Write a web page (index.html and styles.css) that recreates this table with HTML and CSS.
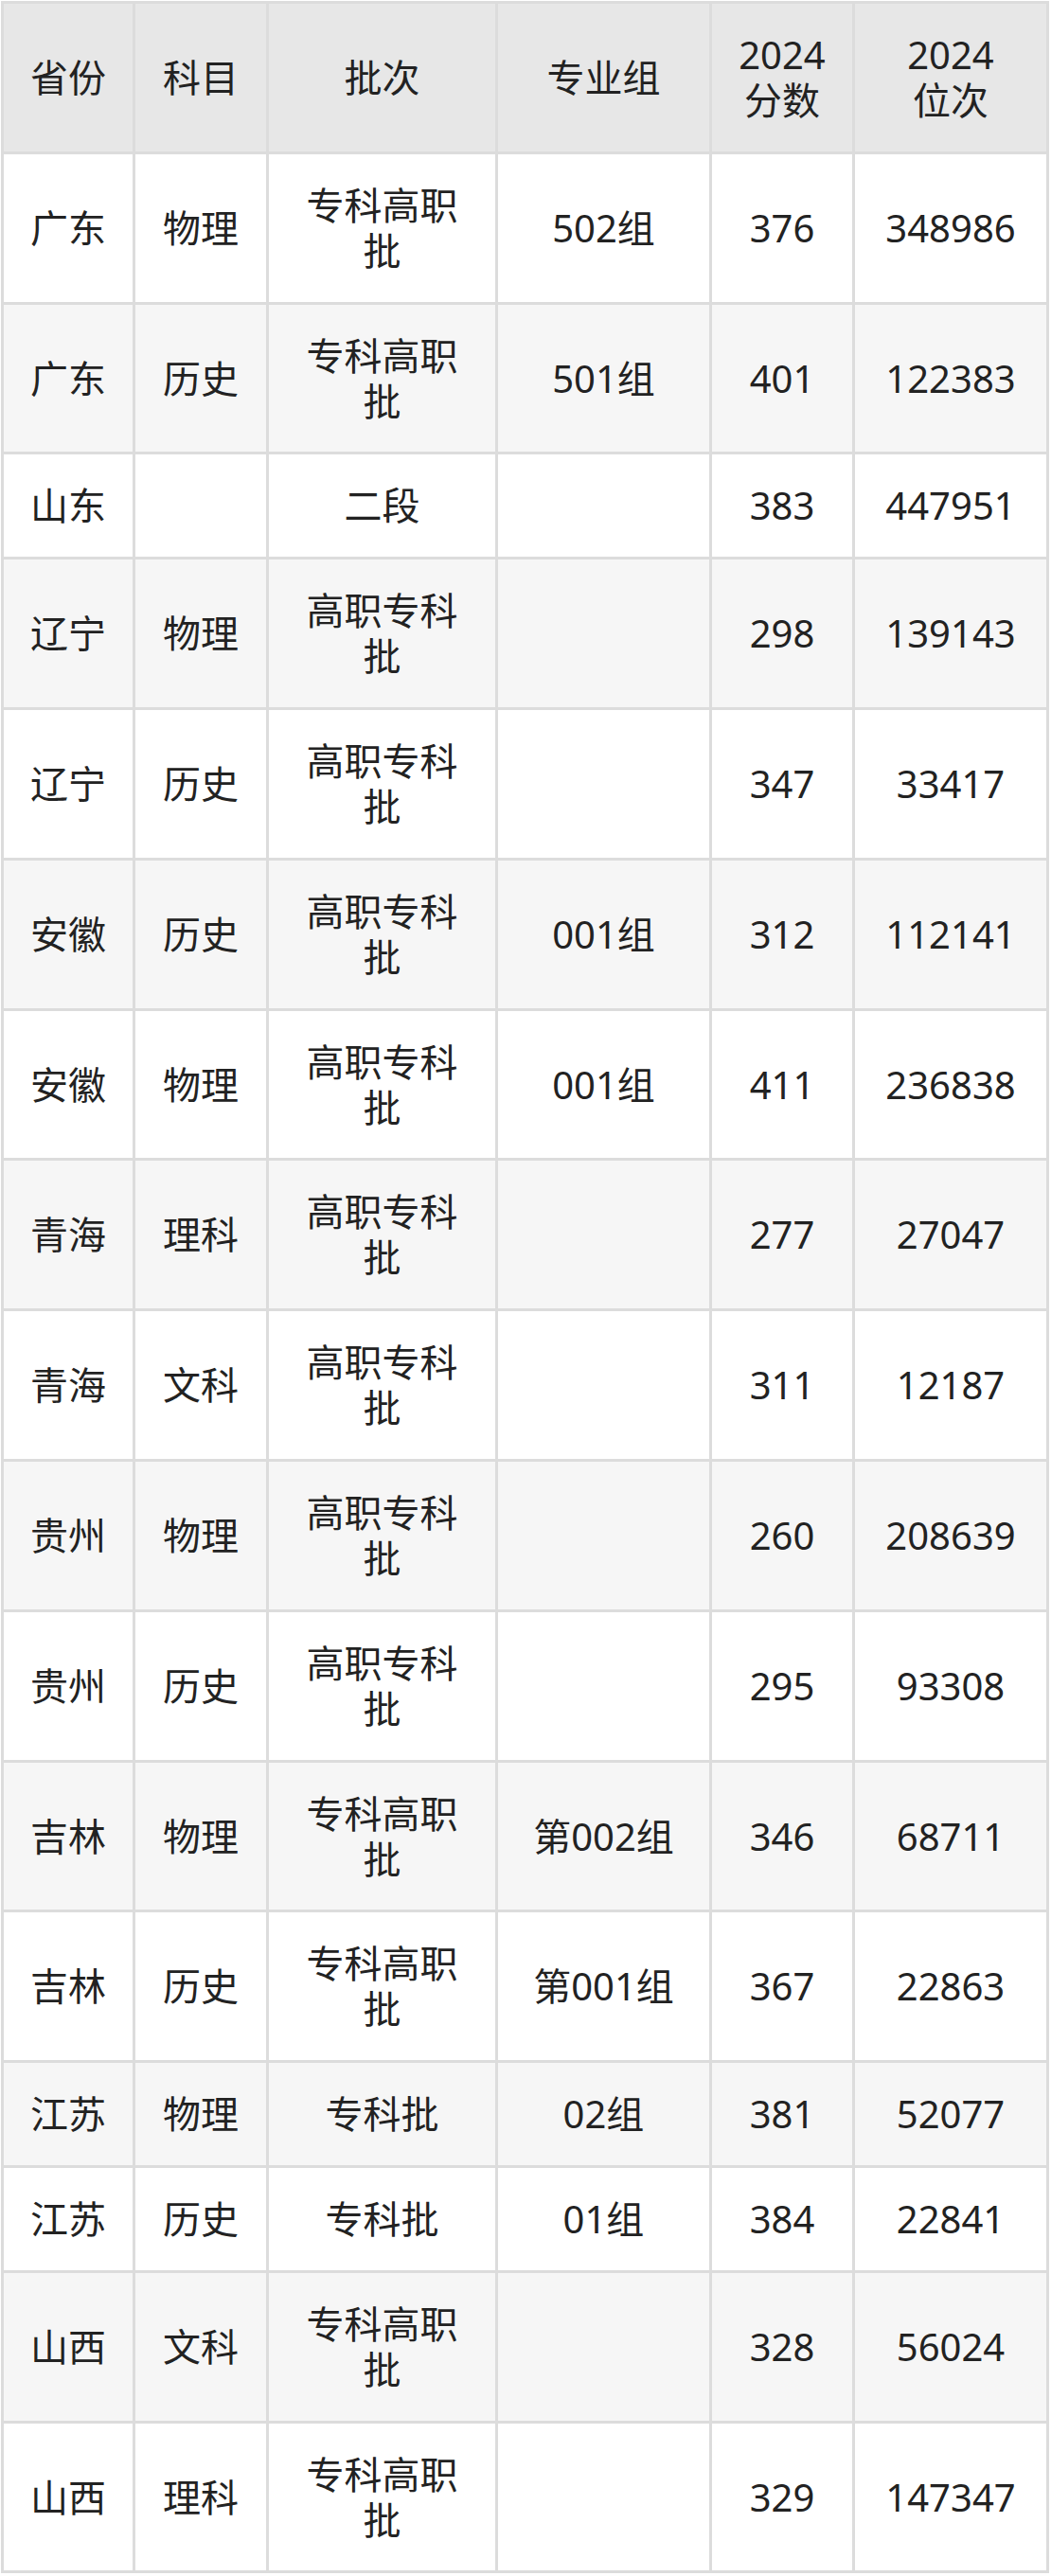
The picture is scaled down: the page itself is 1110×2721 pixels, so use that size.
FILE: index.html
```html
<!DOCTYPE html>
<html lang="zh-CN">
<head>
<meta charset="utf-8">
<title>2024 分数位次</title>
<link rel="stylesheet" href="styles.css">
</head>
<body>
<table class="score-table">
  <colgroup>
    <col class="c-prov"><col class="c-subj"><col class="c-batch"><col class="c-group"><col class="c-score"><col class="c-rank">
  </colgroup>
  <thead>
    <tr class="head">
      <th>省份</th><th>科目</th><th>批次</th><th>专业组</th><th>2024<br>分数</th><th>2024<br>位次</th>
    </tr>
  </thead>
  <tbody>
    <tr class="odd"><td>广东</td><td>物理</td><td>专科高职<br>批</td><td>502组</td><td>376</td><td>348986</td></tr>
    <tr class="even"><td>广东</td><td>历史</td><td>专科高职<br>批</td><td>501组</td><td>401</td><td>122383</td></tr>
    <tr class="odd"><td>山东</td><td></td><td>二段</td><td></td><td>383</td><td>447951</td></tr>
    <tr class="even"><td>辽宁</td><td>物理</td><td>高职专科<br>批</td><td></td><td>298</td><td>139143</td></tr>
    <tr class="odd"><td>辽宁</td><td>历史</td><td>高职专科<br>批</td><td></td><td>347</td><td>33417</td></tr>
    <tr class="even"><td>安徽</td><td>历史</td><td>高职专科<br>批</td><td>001组</td><td>312</td><td>112141</td></tr>
    <tr class="odd"><td>安徽</td><td>物理</td><td>高职专科<br>批</td><td>001组</td><td>411</td><td>236838</td></tr>
    <tr class="even"><td>青海</td><td>理科</td><td>高职专科<br>批</td><td></td><td>277</td><td>27047</td></tr>
    <tr class="odd"><td>青海</td><td>文科</td><td>高职专科<br>批</td><td></td><td>311</td><td>12187</td></tr>
    <tr class="even"><td>贵州</td><td>物理</td><td>高职专科<br>批</td><td></td><td>260</td><td>208639</td></tr>
    <tr class="odd"><td>贵州</td><td>历史</td><td>高职专科<br>批</td><td></td><td>295</td><td>93308</td></tr>
    <tr class="even"><td>吉林</td><td>物理</td><td>专科高职<br>批</td><td>第002组</td><td>346</td><td>68711</td></tr>
    <tr class="odd"><td>吉林</td><td>历史</td><td>专科高职<br>批</td><td>第001组</td><td>367</td><td>22863</td></tr>
    <tr class="even"><td>江苏</td><td>物理</td><td>专科批</td><td>02组</td><td>381</td><td>52077</td></tr>
    <tr class="odd"><td>江苏</td><td>历史</td><td>专科批</td><td>01组</td><td>384</td><td>22841</td></tr>
    <tr class="even"><td>山西</td><td>文科</td><td>专科高职<br>批</td><td></td><td>328</td><td>56024</td></tr>
    <tr class="odd"><td>山西</td><td>理科</td><td>专科高职<br>批</td><td></td><td>329</td><td>147347</td></tr>
  </tbody>
</table>
</body>
</html>
```

FILE: styles.css
```css
html, body {
  margin: 0;
  padding: 0;
  background: #ffffff;
}

.score-table {
  margin: 1px 0 0 1px;
  width: 1107px;
  table-layout: fixed;
  border-collapse: separate;
  border-spacing: 3px;
  background: #dcdcdc;
  font-family: "Noto Sans", "Noto Sans CJK SC", sans-serif;
  font-size: 40px;
  line-height: 48px;
  color: #222222;
}

.c-prov { width: 136px; }
.c-subj { width: 138px; }
.c-batch { width: 239px; }
.c-group { width: 223px; }
.c-score { width: 148px; }
.c-rank { width: 202px; }

.score-table th,
.score-table td {
  padding: 30px 0 29.8px;
  text-align: center;
  vertical-align: middle;
  white-space: nowrap;
  font-weight: normal;
}

.head th { background: #e7e7e7; }
.odd td { background: #ffffff; }
.even td { background: #f6f6f6; }
```
